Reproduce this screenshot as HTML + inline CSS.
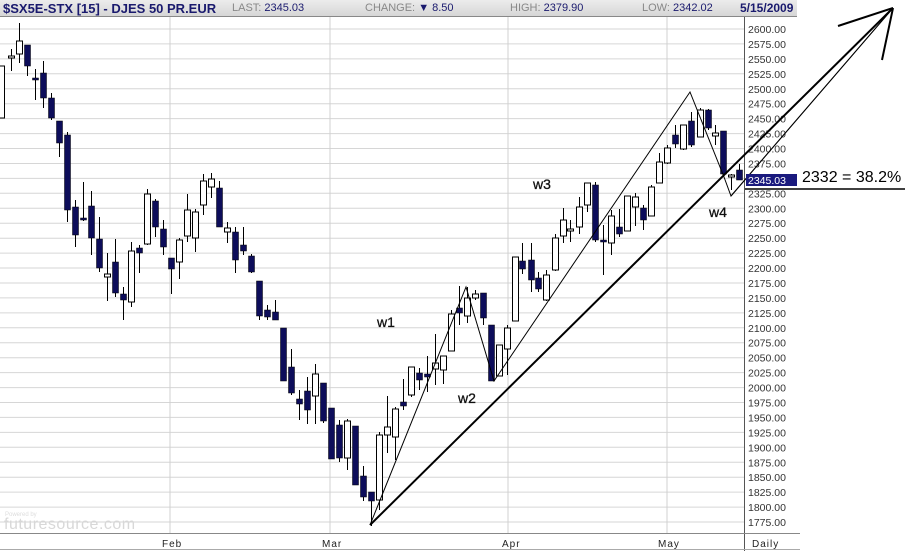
<!DOCTYPE html>
<html><head><meta charset="utf-8"><style>
body{margin:0;width:905px;height:551px;background:#fff;overflow:hidden;font-family:"Liberation Sans",Arial,sans-serif;position:relative}
#hdr{position:absolute;left:0;top:0;width:797px;height:16px;background:linear-gradient(#ececec,#d6d6d6);border-bottom:1px solid #888;font-size:11px;color:#888;white-space:nowrap}
#hdr span{position:absolute;top:2px}
.v{color:#1a1a6e}
svg{position:absolute;left:0;top:0}
</style></head><body>
<svg id="s" width="905" height="551" xmlns="http://www.w3.org/2000/svg"></svg>
<div id="hdr">
<span style="left:3px;top:1px;font-size:13px;font-weight:bold;color:#1a1a6e">$SX5E-STX [15] - DJES 50 PR.EUR</span>
<span style="left:232px">LAST: <span class="v" style="position:static">2345.03</span></span>
<span style="left:365px">CHANGE: <span class="v" style="position:static">▼ 8.50</span></span>
<span style="left:510px">HIGH: <span class="v" style="position:static">2379.90</span></span>
<span style="left:642px">LOW: <span class="v" style="position:static">2342.02</span></span>
<span style="left:740px;top:1px;font-size:12px;font-weight:bold;color:#1a1a6e">5/15/2009</span>
</div>
<script>
var s=document.getElementById('s'),h='';
function y(p){return 29+(2600-p)*0.5976;}
for(var p=2625;p>=1750;p-=25){var yy=y(p);if(yy>17&&yy<533)h+='<line x1="0" x2="744" y1="'+yy.toFixed(1)+'" y2="'+yy.toFixed(1)+'" stroke="#d6d6d6"/>';
 if(p<=2600&&p>=1775)h+='<text x="748" y="'+(yy+4).toFixed(1)+'" font-size="10.5" fill="#333" font-family="Liberation Sans">'+p.toFixed(2)+'</text>';}
[170,330,508,667].forEach(function(x){h+='<line x1="'+x+'" x2="'+x+'" y1="17" y2="533" stroke="#d0d0d0"/>';});
h+='<line x1="744.5" x2="744.5" y1="17" y2="551" stroke="#555"/><line x1="0" x2="800" y1="533.5" y2="533.5" stroke="#888"/><line x1="0" x2="800" y1="549.5" y2="549.5" stroke="#aaa"/>';
h+='<text x="5" y="516" font-size="6" fill="#ddd">Powered by</text><text x="4" y="529" font-size="16" fill="#d8d8d8" letter-spacing="0.5">futuresource.com</text>';
[['Feb',162],['Mar',322],['Apr',502],['May',658],['Daily',752]].forEach(function(a){h+='<text x="'+a[1]+'" y="547" font-size="10" fill="#222" letter-spacing="1">'+a[0]+'</text>';});
var c=[[1,66,118,66,118,1],[11,56,58,49,71,1],[19,41,54,23,63,1],[27,45,66,45,76,0],[35,78,80,69,100,0],[43,73,98,61,108,0],[51,98,118,93,120,0],[59,121,143,121,157,0],[67,135,210,132,222,0],[75,207,235,200,247,0],[83,218,220,182,221,0],[91,206,238,191,255,0],[99,239,268,217,272,0],[107,274,277,253,301,1],[115,262,293,239,297,0],[123,294,300,287,320,0],[131,251,302,242,307,1],[139,248,253,245,273,0],[147,194,244,189,245,1],[155,201,227,199,237,0],[163,229,247,220,255,0],[171,258,269,258,294,0],[179,240,262,238,279,1],[187,210,236,194,242,1],[195,212,238,209,252,1],[203,181,205,174,215,1],[211,179,187,173,198,1],[219,188,227,181,227,0],[227,228,232,222,243,1],[235,232,260,227,273,0],[243,245,251,227,255,0],[251,256,272,254,273,0],[259,281,316,281,320,0],[267,310,317,305,320,0],[275,312,320,300,320,0],[283,328,381,328,381,0],[291,367,393,349,395,0],[299,399,404,390,420,0],[307,391,410,377,424,0],[315,374,396,364,424,1],[323,383,421,383,423,0],[331,408,459,408,459,0],[339,425,458,420,462,0],[347,421,458,419,470,1],[355,426,485,426,485,0],[363,476,497,466,501,0],[371,492,501,492,526,0],[379,435,500,432,510,1],[387,427,435,396,453,1],[395,409,437,407,460,1],[403,402,406,379,410,0],[411,367,395,367,397,1],[419,373,380,368,390,0],[427,374,377,356,392,0],[435,363,369,334,385,1],[443,356,370,356,384,1],[451,314,351,310,351,1],[459,308,313,286,325,0],[467,298,316,287,323,1],[475,294,298,290,300,1],[483,293,318,293,325,0],[491,325,381,325,381,0],[499,345,376,345,376,1],[507,328,349,325,375,1],[515,257,321,257,321,1],[522,261,269,243,274,0],[531,260,280,243,292,0],[538,278,289,272,292,0],[546,275,300,270,301,1],[555,238,270,234,271,1],[563,220,236,208,243,1],[570,229,231,220,242,1],[579,207,227,197,234,1],[587,183,205,183,212,1],[595,185,240,182,242,0],[603,240,242,225,275,0],[611,216,243,210,255,1],[619,227,234,209,237,0],[627,196,231,196,231,1],[635,197,207,193,226,1],[643,208,220,205,230,0],[651,187,216,185,216,1],[659,162,183,153,183,1],[667,148,163,145,164,1],[675,135,144,125,148,0],[683,125,149,125,150,1],[691,121,145,112,147,0],[700,110,137,108,137,1],[708,110,128,109,130,0],[715,133,136,125,145,1],[723,131,174,131,175,0],[731,175,177,174,190,1],[739,170,180,164,180,0]];
c.forEach(function(k){var x=k[0];h+='<line x1="'+(x+.5)+'" x2="'+(x+.5)+'" y1="'+k[3]+'" y2="'+k[4]+'" stroke="#000"/>';
 var hh=Math.max(k[2]-k[1],1.5);
 h+='<rect x="'+(x-2.5)+'" y="'+k[1]+'" width="6" height="'+hh+'" fill="'+(k[5]?'#fff':'#0d0d5a')+'" stroke="#000" stroke-width="'+(k[5]?1:0.5)+'"/>';});
h+='<polyline points="370,525 466,287 494,381 690,92 724,177 731,196 893,8" fill="none" stroke="#000" stroke-width="1"/>';
h+='<line x1="370" y1="525" x2="893" y2="8" stroke="#000" stroke-width="2"/>';
h+='<line x1="731" y1="196" x2="893" y2="8" stroke="#000" stroke-width="1"/>';
h+='<line x1="893" y1="8" x2="838" y2="26" stroke="#000" stroke-width="2"/><line x1="893" y1="8" x2="882" y2="60" stroke="#000" stroke-width="2"/>';
h+='<line x1="745" y1="189" x2="905" y2="189" stroke="#000" stroke-width="1.5"/>';
h+='<rect x="746" y="174" width="51" height="12" fill="#1a1a7e"/><text x="748" y="184" font-size="10.5" fill="#fff">2345.03</text>';
h+='<text x="802" y="182" font-size="16" fill="#000">2332 = 38.2%</text>';
[['w1',377,327],['w2',458,403],['w3',533,189],['w4',709,217]].forEach(function(a){h+='<text x="'+a[1]+'" y="'+a[2]+'" font-size="14" fill="#111" stroke="#111" stroke-width="0.3">'+a[0]+'</text>';});
s.innerHTML=h;
</script>
</body></html>
